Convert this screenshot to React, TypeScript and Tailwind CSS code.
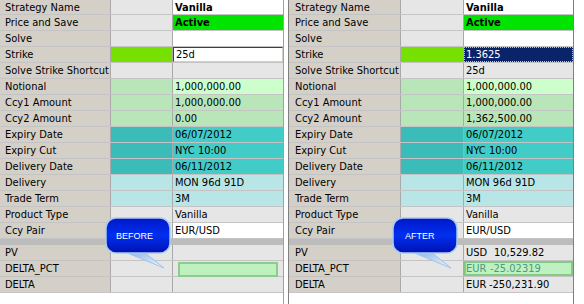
import React from "react";

type Row = {
  label: string;
  color: string;
  valueBg: string;
  left: React.ReactNode;
  right: React.ReactNode;
  bold?: boolean;
  first?: boolean;
};

const GRAY = "bg-[#e6e6e6]";

function Money({ cur, num, pad }: { cur: string; num: string; pad: string }) {
  return (
    <span className="flex whitespace-nowrap">
      <span className="w-[22px] shrink-0">{cur}</span>
      <span className={pad}>{num}</span>
    </span>
  );
}

const rows: Row[] = [
  { label: "Strategy Name", color: GRAY, valueBg: "bg-white", left: "Vanilla", right: "Vanilla", bold: true, first: true },
  { label: "Price and Save", color: GRAY, valueBg: "bg-[#00e400]", left: "Active", right: "Active", bold: true },
  { label: "Solve", color: GRAY, valueBg: "bg-white", left: "", right: "" },
  { label: "Strike", color: "bg-[#76e000]", valueBg: "bg-white", left: "STRIKE_L", right: "STRIKE_R" },
  { label: "Solve Strike Shortcut", color: GRAY, valueBg: GRAY, left: "", right: "25d" },
  { label: "Notional", color: "bg-[#b9e6b9]", valueBg: "bg-[#ccffcc]", left: "1,000,000.00", right: "1,000,000.00" },
  { label: "Ccy1 Amount", color: "bg-[#b9e6b9]", valueBg: "bg-[#b9e6b9]", left: "1,000,000.00", right: "1,000,000.00" },
  { label: "Ccy2 Amount", color: "bg-[#b9e6b9]", valueBg: "bg-[#b9e6b9]", left: "0.00", right: "1,362,500.00" },
  { label: "Expiry Date", color: "bg-[#3cbcb8]", valueBg: "bg-[#42ccc8]", left: "06/07/2012", right: "06/07/2012" },
  { label: "Expiry Cut", color: "bg-[#3cbcb8]", valueBg: "bg-[#42ccc8]", left: "NYC 10:00", right: "NYC 10:00" },
  { label: "Delivery Date", color: "bg-[#3cbcb8]", valueBg: "bg-[#42ccc8]", left: "06/11/2012", right: "06/11/2012" },
  { label: "Delivery", color: "bg-[#b8e6e6]", valueBg: "bg-[#b8e6e6]", left: "MON 96d 91D", right: "MON 96d 91D" },
  { label: "Trade Term", color: "bg-[#b8e6e6]", valueBg: "bg-[#b8e6e6]", left: "3M", right: "3M" },
  { label: "Product Type", color: GRAY, valueBg: GRAY, left: "Vanilla", right: "Vanilla" },
  { label: "Ccy Pair", color: GRAY, valueBg: "bg-white", left: "EUR/USD", right: "EUR/USD" },
];

const bottomRows: Row[] = [
  { label: "PV", color: GRAY, valueBg: GRAY, left: "", right: <Money cur="USD" num="10,529.82" pad="pl-[6px]" /> },
  { label: "DELTA_PCT", color: GRAY, valueBg: GRAY, left: "DPL", right: "DPR" },
  { label: "DELTA", color: GRAY, valueBg: GRAY, left: "", right: <Money cur="EUR" num="-250,231.90" pad="pl-[1px]" /> },
];

function ValueCell({ row, side }: { row: Row; side: "l" | "r" }) {
  const v = side === "l" ? row.left : row.right;
  if (v === "STRIKE_L") {
    return (
      <div className="flex-1 bg-white p-0">
        <div className="h-full border border-t-[#404040] border-l-[#404040] border-r-[#d4d0c8] border-b-[#d4d0c8] bg-white pl-[2px] leading-[13px]">
          25d
        </div>
      </div>
    );
  }
  if (v === "STRIKE_R") {
    return (
      <div className="flex-1 bg-[#0a246a] p-0">
        <div className="h-full border border-dotted border-[#b8c4e0] pl-[1px] leading-[13px] text-white">1.3625</div>
      </div>
    );
  }
  if (v === "DPL") {
    return (
      <div className="flex-1 bg-[#e6e6e6] px-[5px] pt-[1px]">
        <div className="h-[15px] w-[100px] border-2 border-[#8ccc8c] bg-[#bff0bf]" />
      </div>
    );
  }
  if (v === "DPR") {
    return (
      <div className="flex-1 border-2 border-[#86c886] bg-[#bff0bf] pl-[0px] leading-[11px] text-[#4c9a86]">
        <Money cur="EUR" num="-25.02319" pad="pl-[2px]" />
      </div>
    );
  }
  return (
    <div className={`flex-1 pl-[2px] ${row.valueBg} ${row.bold ? "font-bold" : ""}`}>{v}</div>
  );
}

function RowView({ row, side }: { row: Row; side: "l" | "r" }) {
  return (
    <div className={`flex border-b border-[#c4c4c4] ${row.first ? "h-[15px]" : "h-[16px]"}`}>
      <div className={`border-r border-[#a9a9a9] bg-[#d4d0c8] ${side === "l" ? "w-[111px] pl-[5px]" : "w-[112px] pl-[6px]"}`}>
        {row.label}
      </div>
      <div className={`border-r border-[#a9a9a9] ${row.color} ${side === "l" ? "w-[62px]" : "w-[63px]"}`} />
      <ValueCell row={row} side={side} />
    </div>
  );
}

function Bubble({ label, textX }: { label: string; textX: number }) {
  const id = "g" + label;
  return (
    <svg width="74" height="56" viewBox="0 0 74 56" className="absolute">
      <defs>
        <linearGradient id={id} x1="0" y1="0" x2="0" y2="1">
          <stop offset="0" stopColor="#0018c8" />
          <stop offset="0.5" stopColor="#0030f0" />
          <stop offset="1" stopColor="#0010b0" />
        </linearGradient>
        <linearGradient id={id + "t"} x1="0" y1="0" x2="1" y2="1">
          <stop offset="0" stopColor="#7aa8e0" />
          <stop offset="1" stopColor="#f4f8ff" />
        </linearGradient>
      </defs>
      <polygon points="16,34 40,36 60,52" fill={`url(#${id}t)`} stroke="#9ec2ea" strokeWidth="1" />
      <rect x="2" y="2" width="64" height="35" rx="10" fill={`url(#${id})`} stroke="#a8ccf0" strokeWidth="1.5" />
      <text x={textX} y="23" fill="white" fontSize="9" fontFamily="'Liberation Sans', Arial, sans-serif">
        {label}
      </text>
    </svg>
  );
}

function Panel({ side }: { side: "l" | "r" }) {
  return (
    <div className={`relative ${side === "l" ? "w-[284px] border-r border-[#a0a0a0]" : "w-[286px] border-l border-r border-[#808080]"}`}>
      {rows.map((r) => (
        <RowView key={r.label} row={r} side={side} />
      ))}
      <div className="h-[6px] bg-[#bcbcbc]" />
      {bottomRows.map((r) => (
        <RowView key={r.label} row={r} side={side} />
      ))}
      <div className={side === "l" ? "absolute left-[104px] top-[216px]" : "absolute left-[102px] top-[216px]"}>
        <Bubble label={side === "l" ? "BEFORE" : "AFTER"} textX={side === "l" ? 12 : 14} />
      </div>
    </div>
  );
}

export default function App() {
  return (
    <div
      className="flex h-[304px] w-[584px] overflow-hidden bg-white text-[11px] leading-[15px] text-black"
      style={{ fontFamily: "'DejaVu Sans Condensed', 'DejaVu Sans', Tahoma, sans-serif" }}
    >
      <Panel side="l" />
      <div className="w-[4px]" />
      <Panel side="r" />
    </div>
  );
}
